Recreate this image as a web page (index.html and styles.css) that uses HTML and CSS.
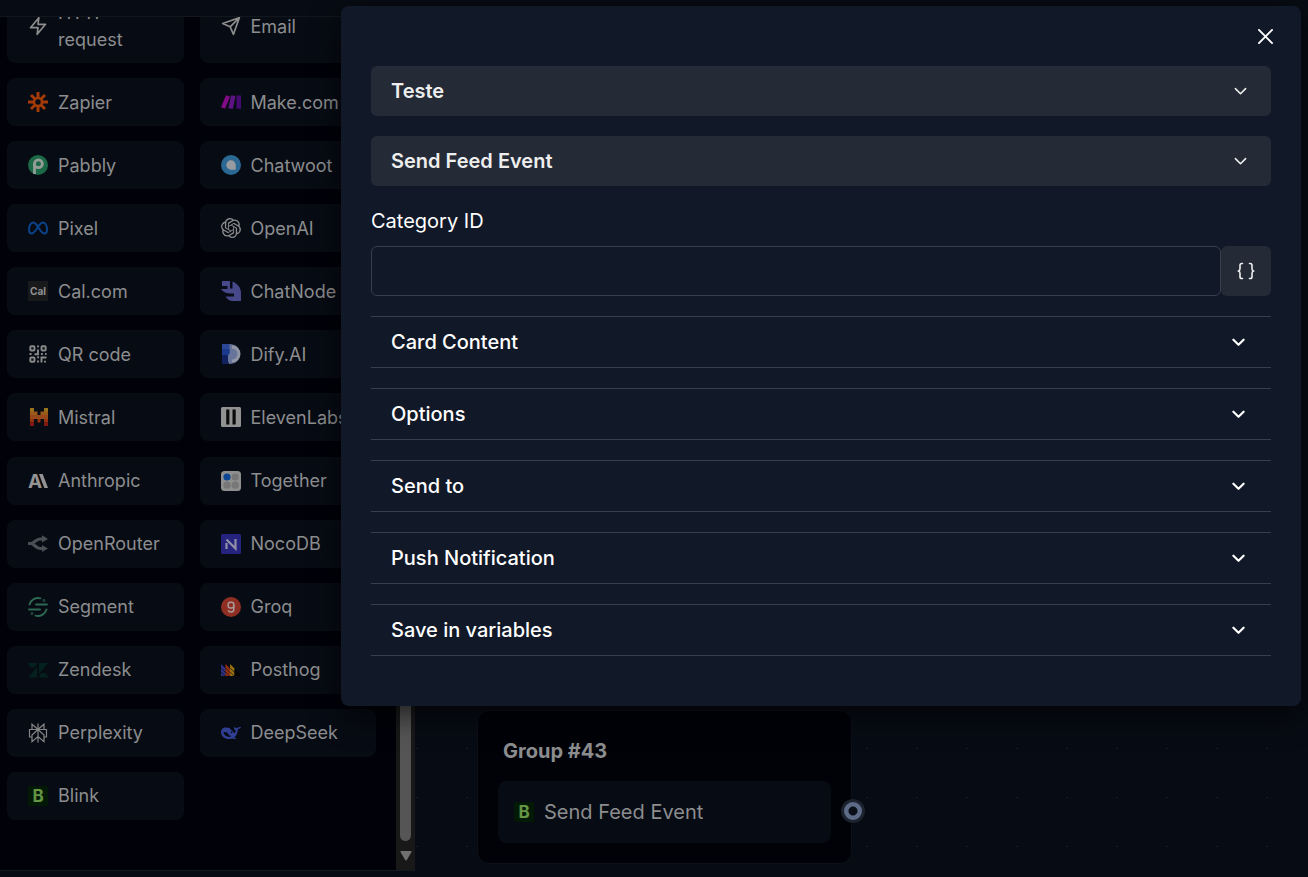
FILE: index.html
```html
<!DOCTYPE html>
<html lang="en">
<head>
  <meta charset="UTF-8">
  <meta name="viewport" content="width=device-width, initial-scale=1.0">
  <title>Flow editor</title>
  <link rel="stylesheet" href="styles.css">
</head>
<body>
  <div class="editor">
    <aside class="sidebar">
      <div class="sidebar-header"></div>
      <div class="sidebar-body">
        <div class="block-pane">
          <div class="block-list">
            <button class="block" type="button">
              <svg class="icon" viewBox="0 0 24 24" fill="none" stroke="#8e8e8e" stroke-width="2" stroke-linecap="round" stroke-linejoin="round"><path d="M13 2 3 14h9l-1 8 10-12h-9z"/></svg>
              <span>HTTP request</span>
            </button>
            <button class="block" type="button">
              <svg class="icon" viewBox="0 0 24 24" fill="none" stroke="#8e8e8e" stroke-width="2" stroke-linecap="round" stroke-linejoin="round"><path d="M22 2 11 13M22 2l-7 20-4-9-9-4z"/></svg>
              <span>Email</span>
            </button>
            <button class="block" type="button">
              <svg class="icon" viewBox="0 0 20 20" stroke="#a33a08" stroke-width="3" fill="none"><circle cx="10" cy="10" r="4" stroke-width="2.6"/><path d="M10 0v6M10 14v6M0 10h6M14 10h6M3 3l4 4M13 13l4 4M17 3l-4 4M7 13l-4 4"/></svg>
              <span>Zapier</span>
            </button>
            <button class="block" type="button">
              <svg class="icon" viewBox="0 0 20 20"><path fill="#820b86" d="M5 3.300l4 1.500-5 12-4-1.600z"/><path fill="#5b1482" d="M10 3.300l4.500.7-2.600 13-4.500-.7z"/><path fill="#430b70" d="M15.500 3.400H20v13.300h-4.500z"/></svg>
              <span>Make.com</span>
            </button>
            <button class="block" type="button">
              <svg class="icon" viewBox="0 0 20 20"><circle cx="10" cy="10" r="10" fill="#1c6947"/><circle cx="10.400" cy="8.800" r="3.900" fill="none" stroke="#959d98" stroke-width="2.800"/><path d="M6.500 8.500V19" stroke="#959d98" stroke-width="2.800"/></svg>
              <span>Pabbly</span>
            </button>
            <button class="block" type="button">
              <svg class="icon" viewBox="0 0 20 20"><circle cx="10" cy="10" r="10" fill="#2b6894"/><path d="M10 5.300a4.700 4.700 0 1 0 0 9.400h4.700V10A4.700 4.700 0 0 0 10 5.300z" fill="#989ca0"/></svg>
              <span>Chatwoot</span>
            </button>
            <button class="block" type="button">
              <svg class="icon" viewBox="0 0 20 20" fill="none" stroke="#0a4389" stroke-width="2"><path d="M10 9C8 5.500 6.700 4.400 5.100 4.400 2.700 4.400 1 8 1 11.800c0 2.200 1 3.700 2.700 3.700C6 15.500 7.400 12.800 10 8.800c2-3 3.300-4.400 5-4.400 2.500 0 4 3.600 4 7.400 0 2.200-1 3.700-2.700 3.700C14 15.500 12.500 13 10 9z"/></svg>
              <span>Pixel</span>
            </button>
            <button class="block" type="button">
              <svg class="icon" viewBox="0 0 24 24" fill="#8e8e8e"><path d="M22.2819 9.8211a5.9847 5.9847 0 0 0-.5157-4.9108 6.0462 6.0462 0 0 0-6.5098-2.9A6.0651 6.0651 0 0 0 4.9807 4.1818a5.9847 5.9847 0 0 0-3.9977 2.9 6.0462 6.0462 0 0 0 .7427 7.0966 5.98 5.98 0 0 0 .511 4.9107 6.051 6.051 0 0 0 6.5146 2.9001A5.9847 5.9847 0 0 0 13.2599 24a6.0557 6.0557 0 0 0 5.7718-4.2058 5.9894 5.9894 0 0 0 3.9977-2.9001 6.0557 6.0557 0 0 0-.7475-7.0729zm-9.022 12.6081a4.4755 4.4755 0 0 1-2.8764-1.0408l.1419-.0804 4.7783-2.7582a.7948.7948 0 0 0 .3927-.6813v-6.7369l2.02 1.1686a.071.071 0 0 1 .038.052v5.5826a4.504 4.504 0 0 1-4.4945 4.4944zm-9.6607-4.1254a4.4708 4.4708 0 0 1-.5346-3.0137l.142.0852 4.783 2.7582a.7712.7712 0 0 0 .7806 0l5.8428-3.3685v2.3324a.0804.0804 0 0 1-.0332.0615L9.74 19.9502a4.4992 4.4992 0 0 1-6.1408-1.6464zM2.3408 7.8956a4.485 4.485 0 0 1 2.3655-1.9728V11.6a.7664.7664 0 0 0 .3879.6765l5.8144 3.3543-2.0201 1.1685a.0757.0757 0 0 1-.071 0l-4.8303-2.7865A4.504 4.504 0 0 1 2.3408 7.872zm16.5963 3.8558L13.1038 8.364 15.1192 7.2a.0757.0757 0 0 1 .071 0l4.8303 2.7913a4.4944 4.4944 0 0 1-.6765 8.1042v-5.6772a.79.79 0 0 0-.407-.667zm2.0107-3.0231l-.142-.0852-4.7735-2.7818a.7759.7759 0 0 0-.7854 0L9.409 9.2297V6.8974a.0662.0662 0 0 1 .0284-.0615l4.8303-2.7866a4.4992 4.4992 0 0 1 6.6802 4.66zM8.3065 12.863l-2.02-1.1638a.0804.0804 0 0 1-.038-.0567V6.0742a4.4992 4.4992 0 0 1 7.3757-3.4537l-.142.0805L8.704 5.459a.7948.7948 0 0 0-.3927.6813zm1.0976-2.3654l2.602-1.4998 2.6069 1.4998v2.9994l-2.5974 1.4997-2.6067-1.4997Z"/></svg>
              <span>OpenAI</span>
            </button>
            <button class="block" type="button">
              <svg class="icon" viewBox="0 0 20 20"><rect width="20" height="20" fill="#18191a"/><text class="logo-text" x="10" y="13.500" font-size="10" fill="#929292">Cal</text></svg>
              <span>Cal.com</span>
            </button>
            <button class="block" type="button">
              <svg class="icon" viewBox="0 0 20 20"><path fill="#46488a" d="M1 0h8v7.500h2.500V0.600C16.500 2.500 20 7 20 12v8h-8c-3.500 0-6-1.800-7.500-4.500H13v-3H9.500C5 12.500 1.500 10.500 0 8h6.500V5H1z"/></svg>
              <span>ChatNode</span>
            </button>
            <button class="block" type="button">
              <svg class="icon" viewBox="0 0 20 20" fill="none" stroke="#8a8a8a" stroke-width="1.900"><rect x="2.300" y="2.300" width="4.200" height="4.200" rx="1"/><rect x="13.500" y="2.300" width="4.200" height="4.200" rx="1"/><rect x="2.300" y="13.500" width="4.200" height="4.200" rx="1"/><path d="M10 1.500v1.800M10 5.500v4.700H6.500M1.500 10h2M9.200 13.200h1.800M10 16.500v2M13 10h1.800M17 10h1.500M13.500 18.500v-5h5M17 16.800v1.700"/></svg>
              <span>QR code</span>
            </button>
            <button class="block" type="button">
              <svg class="icon" viewBox="0 0 20 20"><path d="M1 0h7c7 0 11 4 11 10s-4 10-11 10z" fill="#68759a"/><path d="M1 0h7.500v9H1z" fill="#2a4896"/><path d="M1 5h7.500v5L7 11v9H1z" fill="#1c3a8d"/><path d="M1 11h6v9H1z" fill="#11205f"/><path d="M11 3a7 7 0 0 1 0 14" fill="none" stroke="#9297a3" stroke-width="3"/></svg>
              <span>Dify.AI</span>
            </button>
            <button class="block" type="button">
              <svg class="icon" viewBox="0 0 20 20"><path fill="#98731c" d="M2 1h4v4H2zM16 1h4v4h-4z"/><path fill="#98591b" d="M2 4.500h7.500V8H2zM12.500 4.500H20V8h-7.500z"/><path fill="#98481a" d="M2 8h18v4H2z"/><path fill="#92300f" d="M2 12h4v3.500H2zM9.500 12h3v3.500h-3zM16 12h4v3.500h-4z"/><path fill="#82180f" d="M2 15.500h4V19H2zM16 15.500h4V19h-4z"/></svg>
              <span>Mistral</span>
            </button>
            <button class="block" type="button">
              <svg class="icon" viewBox="0 0 20 20"><rect width="20" height="20" rx="1.500" fill="#929292"/><path fill="#0b0b0b" d="M5.200 2.500h3.200v15H5.200zM11.500 2.500h3.200v15h-3.200z"/></svg>
              <span>ElevenLabs</span>
            </button>
            <button class="block" type="button">
              <svg class="icon" viewBox="0 0 20 20"><text class="logo-text" x="7" y="17" font-size="19" fill="#939393">A</text><path d="M11 3h3.700L20 17h-3.700z" fill="#939393"/></svg>
              <span>Anthropic</span>
            </button>
            <button class="block" type="button">
              <svg class="icon" viewBox="0 0 20 20"><rect width="20" height="20" rx="3.500" fill="#8f8f8f"/><circle cx="6" cy="6" r="3.600" fill="#0b4594"/><g fill="#777"><circle cx="14.200" cy="6" r="3.600"/><circle cx="6" cy="14.200" r="3.600"/><circle cx="14.200" cy="14.200" r="3.600"/></g></svg>
              <span>Together</span>
            </button>
            <button class="block" type="button">
              <svg class="icon" viewBox="0 0 20 20"><path d="M0 9.500h3c3 0 5-4.500 9-4.500h3M3 9.500c3 0 5 5 9 5h3" fill="none" stroke="#4b4e53" stroke-width="3.200"/><path fill="#4b4e53" d="M14 1.300l6 3.700-6 3.500zM14 11l6 3.500-6 3.500z"/></svg>
              <span>OpenRouter</span>
            </button>
            <button class="block" type="button">
              <svg class="icon" viewBox="0 0 20 20"><rect width="20" height="20" rx="1.500" fill="#25237e"/><path d="M5.500 15V9M5.500 5.500l9 9V5" fill="none" stroke="#9190a8" stroke-width="2.200"/></svg>
              <span>NocoDB</span>
            </button>
            <button class="block" type="button">
              <svg class="icon" viewBox="0 0 20 20" fill="none" stroke="#2d6952" stroke-width="1.900" stroke-linecap="round"><path d="M1.500 7.500A9 9 0 0 1 12.500 1.300M18.500 12.500A9 9 0 0 1 7.500 18.700M8 7.500h11M1 12.500h11"/><circle cx="16" cy="3.500" r=".4"/><circle cx="4" cy="16.500" r=".4"/></svg>
              <span>Segment</span>
            </button>
            <button class="block" type="button">
              <svg class="icon" viewBox="0 0 20 20"><circle cx="10" cy="10" r="10" fill="#8f2f23"/><rect x="7.200" y="5.200" width="5.600" height="5.800" rx="2.300" fill="none" stroke="#a99a98" stroke-width="1.500"/><path d="M12.800 7.500v5c0 1.500-1 2.500-2.800 2.500-1.500 0-2.500-.7-2.800-1.800" fill="none" stroke="#a99a98" stroke-width="1.500"/></svg>
              <span>Groq</span>
            </button>
            <button class="block" type="button">
              <svg class="icon" viewBox="0 0 20 20" fill="#04201f"><path d="M0 3h9a4.500 4.500 0 0 1-9 0zM9 7v10.500H0zM11 3h9l-9 11zM11 17.500a4.500 4.500 0 0 1 9 0z"/></svg>
              <span>Zendesk</span>
            </button>
            <button class="block" type="button">
              <svg class="icon" viewBox="0 0 20 20"><path fill="#2b3184" d="M0 4l4.500 4.500V16H0z"/><path fill="#962f0c" d="M4.500 4L9 8.500V16H4.500z"/><path fill="#98700d" d="M9 4l4.500 4.500V16H9z"/><path d="M0 8l4.500 4.500M4.500 8L9 12.500M9 8l4.500 4.500M0 12l4 4M4.500 12l4 4M9 12l4 4" stroke="#111018" stroke-width=".7"/><path fill="#020203" d="M13.500 9l6 6-1 1h-5z"/></svg>
              <span>Posthog</span>
            </button>
            <button class="block" type="button">
              <svg class="icon" viewBox="0 0 20 20" fill="none" stroke="#858585" stroke-width="1.200"><path d="M10 .5v19M4 1.200l6 5.300 6-5.300v5.300H4zM4 6.500H1.500v7.500H4M16 6.500h2.500v7.500H16M10 6.500L4 12v6.700l6-5.200 6 5.200V12z"/></svg>
              <span>Perplexity</span>
            </button>
            <button class="block" type="button">
              <svg class="icon" viewBox="0 0 20 20"><path fill="#303e94" d="M20 4.200c-.7 1-1.700 1.700-3 1.600-.3 4-1.400 6.700-3.600 8.500.7.700 1.300 1 2 1.200-1.700.9-3.200.5-4.200 0C6 17.300 0 14.500 0 9c0-3.700 3.500-5.300 7-3.900 1.300-.7 2-.4 2 .8 2 1.300 3.300 2.800 4.500 4.300 1-.7 1.300-1.700 1-2.700-1.200-.8-1.700-2-1.300-3.700.8 1 1.700 1.400 2.800 1.300 1.200-.8 2.500-1.200 4-.9z"/><path fill="#070b13" d="M2.500 9c3-.4 5.900 1.500 7.600 4.600C6.500 14.500 2.700 12.500 2.500 9z"/><path fill="#303e94" d="M6 9.500l3 1.500-.5 2z"/><circle cx="10.600" cy="9.300" r=".9" fill="#070b13"/></svg>
              <span>DeepSeek</span>
            </button>
            <button class="block" type="button">
              <svg class="icon" viewBox="0 0 20 20"><rect width="20" height="20" rx="2" fill="#021a05"/><text class="logo-text" x="10" y="16" font-size="17" fill="#659545">B</text></svg>
              <span>Blink</span>
            </button>
          </div>
        </div>
        <div class="scrollbar">
          <div class="scroll-thumb"></div>
          <svg class="scroll-arrow" viewBox="0 0 12 10" fill="#707070"><path d="M1 0h10q1 0 .5 1L6.800 9q-.8 1-1.600 0L.5 1Q0 0 1 0z"/></svg>
        </div>
      </div>
      <div class="sidebar-footer"></div>
    </aside>

    <main class="canvas">
      <section class="node">
        <h2 class="node-title">Group #43</h2>
        <div class="node-block">
          <svg class="icon" viewBox="0 0 20 20"><rect width="20" height="20" rx="2" fill="#021a05"/><text class="logo-text" x="10" y="16" font-size="17" fill="#659545">B</text></svg>
          <span>Send Feed Event</span>
        </div>
        <span class="node-port"></span>
      </section>
    </main>
  </div>

  <div class="modal" role="dialog" aria-label="Send Feed Event">
    <button class="modal-close" type="button" aria-label="Close">
      <svg viewBox="0 0 16 16" fill="none" stroke="#fff" stroke-width="2" stroke-linecap="round"><path d="M1 1l14 14M15 1L1 15"/></svg>
    </button>

    <div class="select-field">
      <select class="select" aria-label="Account">
        <option>Teste</option>
      </select>
      <svg class="chevron" viewBox="0 0 14 8" fill="none" stroke="#eee" stroke-width="1.700" stroke-linecap="round" stroke-linejoin="round"><path d="M1.500 1.500L7 7l5.500-5.500"/></svg>
    </div>

    <div class="select-field">
      <select class="select" aria-label="Action">
        <option>Send Feed Event</option>
      </select>
      <svg class="chevron" viewBox="0 0 14 8" fill="none" stroke="#eee" stroke-width="1.700" stroke-linecap="round" stroke-linejoin="round"><path d="M1.500 1.500L7 7l5.500-5.500"/></svg>
    </div>

    <div class="field">
      <label for="categoryId">Category ID</label>
      <div class="input-row">
        <input type="text" id="categoryId">
        <button class="variable-button" type="button" aria-label="Insert variable">
          <svg viewBox="0 0 18 18" fill="none" stroke="#eee" stroke-width="1.600" stroke-linecap="round" stroke-linejoin="round"><path d="M5.500 1.500h-.7C3.500 1.500 3 2.200 3 3.300v3.500C3 8 2.500 8.800 1.300 9 2.500 9.200 3 10 3 11.200v3.500c0 1.100.5 1.800 1.800 1.800h.7M12.500 1.500h.7c1.300 0 1.800.7 1.800 1.800v3.500C15 8 15.500 8.800 16.700 9 15.500 9.200 15 10 15 11.200v3.500c0 1.100-.5 1.800-1.800 1.800h-.7"/></svg>
        </button>
      </div>
    </div>

    <button class="accordion" type="button">
      <span>Card Content</span>
      <svg class="chevron" viewBox="0 0 14 8" fill="none" stroke="#fff" stroke-width="2.300" stroke-linecap="round" stroke-linejoin="round"><path d="M1.500 1.500L7 7l5.500-5.500"/></svg>
    </button>
    <button class="accordion" type="button">
      <span>Options</span>
      <svg class="chevron" viewBox="0 0 14 8" fill="none" stroke="#fff" stroke-width="2.300" stroke-linecap="round" stroke-linejoin="round"><path d="M1.500 1.500L7 7l5.500-5.500"/></svg>
    </button>
    <button class="accordion" type="button">
      <span>Send to</span>
      <svg class="chevron" viewBox="0 0 14 8" fill="none" stroke="#fff" stroke-width="2.300" stroke-linecap="round" stroke-linejoin="round"><path d="M1.500 1.500L7 7l5.500-5.500"/></svg>
    </button>
    <button class="accordion" type="button">
      <span>Push Notification</span>
      <svg class="chevron" viewBox="0 0 14 8" fill="none" stroke="#fff" stroke-width="2.300" stroke-linecap="round" stroke-linejoin="round"><path d="M1.500 1.500L7 7l5.500-5.500"/></svg>
    </button>
    <button class="accordion" type="button">
      <span>Save in variables</span>
      <svg class="chevron" viewBox="0 0 14 8" fill="none" stroke="#fff" stroke-width="2.300" stroke-linecap="round" stroke-linejoin="round"><path d="M1.500 1.500L7 7l5.500-5.500"/></svg>
    </button>
  </div>
</body>
</html>
```
FILE: styles.css
```css
* {
  box-sizing: border-box;
}
body {
  margin: 0;
  background-color: #070b13;
  font-family: Inter, "Liberation Sans", sans-serif;
  font-size: 20px;
  color: #fff;
}
button, input, select {
  font: inherit;
  color: inherit;
}
button {
  cursor: pointer;
}
svg {
  display: block;
}

/* Editor behind the dialog */
.editor {
  display: flex;
  height: 100vh;
  overflow: hidden;
  color: #8c8d8f;
}
.sidebar {
  display: flex;
  flex-direction: column;
  flex: none;
  width: 415px;
}
.sidebar-header {
  height: 17px;
  border-bottom: 1px solid #12161d;
}
.sidebar-body {
  display: flex;
  flex: 1;
  min-height: 0;
}
.sidebar-footer {
  height: 7px;
  border-top: 1px solid #15181f;
}
.block-pane {
  display: flex;
  flex-direction: column;
  justify-content: flex-end;
  flex: 1;
  padding: 0 20px 50px 7px;
  overflow: hidden;
  background-color: #010209;
}
.block-list {
  display: grid;
  flex: none;
  grid-template-columns: 1fr 1fr;
  align-content: space-between;
  column-gap: 16px;
  height: calc(100% + 28px);
}
.block {
  display: flex;
  align-items: center;
  gap: 10px;
  min-height: 48px;
  padding: 9px 20px;
  border: 1px solid #080c13;
  border-radius: 8px;
  background-color: #070b13;
  font-size: 18px;
  line-height: 27px;
  text-align: left;
}
.icon {
  flex: none;
  width: 20px;
  height: 20px;
  overflow: visible;
}
.logo-text {
  font-family: Inter, "Liberation Sans", sans-serif;
  font-weight: 700;
  text-anchor: middle;
}
.scrollbar {
  display: flex;
  flex-direction: column;
  align-items: center;
  gap: 10px;
  width: 19px;
  padding-bottom: 9px;
  background-color: #171817;
}
.scroll-thumb {
  flex: 1;
  width: 11px;
  border-radius: 6px;
  background-color: #555;
}
.scroll-arrow {
  width: 12px;
  height: 10px;
}
.canvas {
  position: relative;
  flex: 1;
  background-image: radial-gradient(circle, #171b22 1px, transparent 1px);
  background-size: 50px 49px;
  background-position: -23px -11px;
}
.node {
  position: absolute;
  left: 62px;
  top: 710px;
  width: 375px;
  padding: 20px;
  border: 1px solid #0c1017;
  border-radius: 12px;
  background-color: #010208;
}
.node-title {
  margin: 0 0 10px;
  padding: 5px;
  font-size: 20px;
  font-weight: 700;
  line-height: 30px;
}
.node-block {
  display: flex;
  align-items: center;
  gap: 10px;
  height: 62px;
  padding: 0 16px;
  border-radius: 8px;
  background-color: #070b13;
}
.node-port {
  position: absolute;
  right: -14px;
  bottom: 40px;
  width: 24px;
  height: 24px;
  border: 3px solid #1c222e;
  border-radius: 50%;
  background: radial-gradient(circle, #0a0e16 4px, #5d6b88 5px);
}

/* Dialog */
.modal {
  position: absolute;
  top: 6px;
  right: 7px;
  display: flex;
  flex-direction: column;
  gap: 20px;
  width: calc(100% - 348px);
  padding: 60px 30px 50px;
  border-radius: 8px;
  background-color: #111827;
  box-shadow: 0 10px 30px rgba(0, 0, 0, 0.6);
}
.modal-close {
  position: absolute;
  top: 15px;
  right: 20px;
  display: flex;
  align-items: center;
  justify-content: center;
  width: 31px;
  height: 31px;
  padding: 0;
  border: none;
  background: none;
}
.modal-close svg {
  width: 15px;
  height: 15px;
}
.select-field {
  display: grid;
  align-items: center;
}
.select-field > * {
  grid-area: 1 / 1;
}
.select {
  width: 100%;
  height: 50px;
  padding: 0 50px 0 20px;
  border: none;
  border-radius: 6px;
  background-color: #242a36;
  color: #eee;
  font-weight: 600;
  appearance: none;
}
.chevron {
  width: 13px;
  height: 8px;
}
.select-field .chevron {
  justify-self: end;
  margin-right: 24px;
  pointer-events: none;
}
.field {
  display: flex;
  flex-direction: column;
  gap: 10px;
}
.field label {
  line-height: 30px;
}
.input-row {
  display: flex;
}
.input-row input {
  flex: 1;
  min-width: 0;
  height: 50px;
  padding: 0 20px;
  border: 1px solid #383e4b;
  border-radius: 6px;
  background-color: transparent;
}
.variable-button {
  display: flex;
  align-items: center;
  justify-content: center;
  width: 50px;
  height: 50px;
  padding: 0;
  border: none;
  border-radius: 6px;
  background-color: #242a36;
}
.variable-button svg {
  width: 18px;
  height: 18px;
}
.accordion {
  display: flex;
  align-items: center;
  justify-content: space-between;
  height: 52px;
  padding: 0 26px 0 20px;
  border: solid #383e4b;
  border-width: 1px 0;
  background: none;
  font-weight: 500;
  text-align: left;
}
```
